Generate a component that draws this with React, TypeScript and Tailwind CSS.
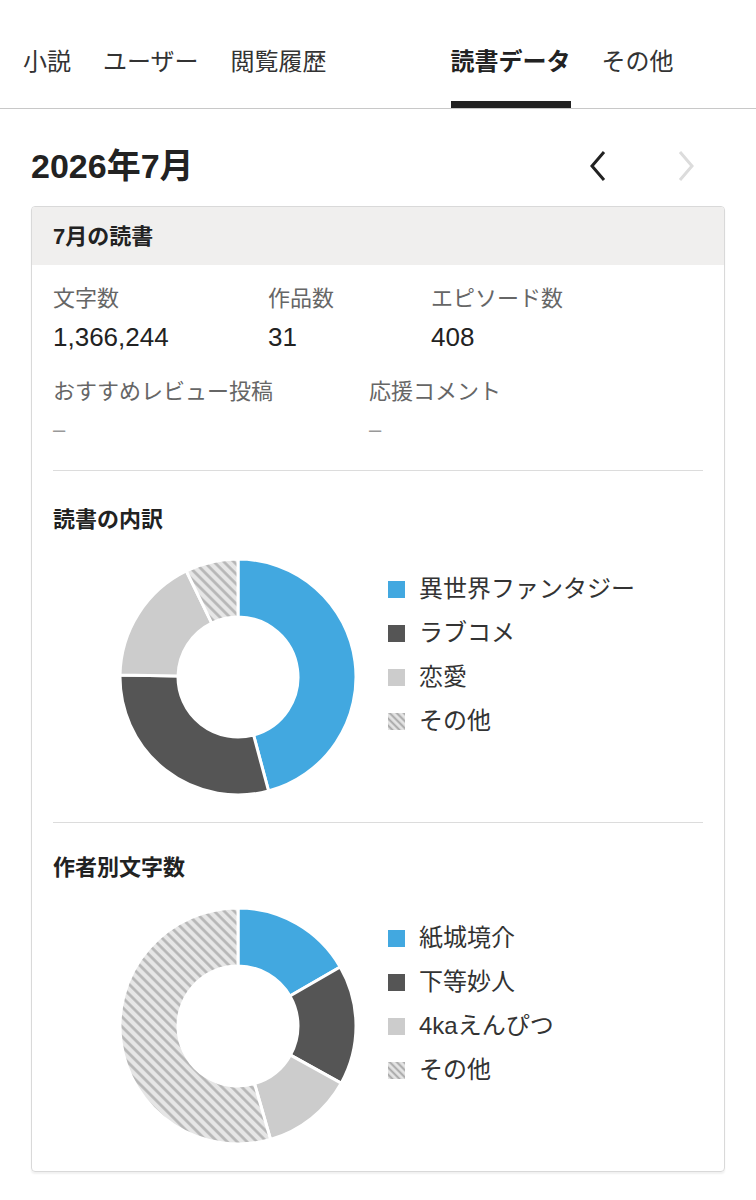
import React from "react";

type Seg = { from: number; to: number; fill: string };

function pt(cx: number, cy: number, r: number, deg: number) {
  const a = ((deg - 90) * Math.PI) / 180;
  return [cx + r * Math.cos(a), cy + r * Math.sin(a)];
}

function arcPath(cx: number, cy: number, ro: number, ri: number, a0: number, a1: number) {
  const [x0, y0] = pt(cx, cy, ro, a0);
  const [x1, y1] = pt(cx, cy, ro, a1);
  const [x2, y2] = pt(cx, cy, ri, a1);
  const [x3, y3] = pt(cx, cy, ri, a0);
  const large = a1 - a0 > 180 ? 1 : 0;
  return `M ${x0} ${y0} A ${ro} ${ro} 0 ${large} 1 ${x1} ${y1} L ${x2} ${y2} A ${ri} ${ri} 0 ${large} 0 ${x3} ${y3} Z`;
}

const BLUE = "#42a8e0";
const DARK = "#555555";
const LIGHT = "#cccccc";

function Donut({ id, segs }: { id: string; segs: Seg[] }) {
  return (
    <svg width="240" height="240" viewBox="0 0 240 240" className="shrink-0">
      <defs>
        <pattern id={id} width="7" height="7" patternUnits="userSpaceOnUse" patternTransform="rotate(-45)">
          <rect width="7" height="7" fill="#e6e6e6" />
          <line x1="1.5" y1="0" x2="1.5" y2="7" stroke="#b4b4b4" strokeWidth="2.6" />
        </pattern>
      </defs>
      {segs.map((s, i) => (
        <path
          key={i}
          d={arcPath(120, 120, 118, 60, s.from, s.to)}
          fill={s.fill === "hatch" ? `url(#${id})` : s.fill}
          stroke="#ffffff"
          strokeWidth="3"
          strokeLinejoin="miter"
        />
      ))}
    </svg>
  );
}

function Swatch({ kind }: { kind: string }) {
  if (kind === "hatch") {
    return (
      <svg width="17" height="17" viewBox="0 0 17 17" className="shrink-0">
        <defs>
          <pattern id="sw" width="5" height="5" patternUnits="userSpaceOnUse" patternTransform="rotate(-45)">
            <rect width="5" height="5" fill="#e4e4e4" />
            <line x1="1.2" y1="0" x2="1.2" y2="5" stroke="#aaaaaa" strokeWidth="2" />
          </pattern>
        </defs>
        <rect width="17" height="17" fill="url(#sw)" />
      </svg>
    );
  }
  return <span className="block w-[17px] h-[17px] shrink-0" style={{ backgroundColor: kind }} />;
}

function Legend({ items }: { items: { c: string; t: string }[] }) {
  return (
    <div className="flex flex-col pt-[10px] ml-[30px]">
      {items.map((it) => (
        <div key={it.t} className="flex items-center h-[44px] gap-[14px]">
          <Swatch kind={it.c} />
          <span className="text-[24px] leading-none text-[#333]">{it.t}</span>
        </div>
      ))}
    </div>
  );
}

export default function App() {
  return (
    <div className="w-[756px] min-h-[1200px] bg-white text-[#222] font-['Liberation_Sans','Noto_Sans_CJK_JP',sans-serif]">
      {/* Tabs */}
      <nav className="flex h-[109px] border-b border-[#c8c8c8] pl-[23px]">
        <div className="h-[108px] pt-[23px] border-b-[7px] border-transparent flex items-center text-[24px] text-[#333]">小説</div>
        <div className="h-[108px] pt-[23px] border-b-[7px] border-transparent flex items-center text-[24px] text-[#333] ml-[32px]">ユーザー</div>
        <div className="h-[108px] pt-[23px] border-b-[7px] border-transparent flex items-center text-[24px] text-[#333] ml-[32px]">閲覧履歴</div>
        <div className="h-[108px] pt-[23px] border-b-[7px] border-[#222] flex items-center text-[24px] font-bold text-[#222] ml-[124px]">読書データ</div>
        <div className="h-[108px] pt-[23px] border-b-[7px] border-transparent flex items-center text-[24px] text-[#333] ml-[31px]">その他</div>
      </nav>

      {/* Month header */}
      <div className="flex items-center h-[40px] mt-[37px] pl-[31px] pr-[60px]">
        <h1 className="text-[34px] font-bold leading-none text-[#222]">2026年7月</h1>
        <div className="ml-auto flex items-center gap-[68px]">
          <svg width="20" height="32" viewBox="0 0 20 32">
            <polyline points="16,2 4,16 16,30" fill="none" stroke="#222" strokeWidth="3" />
          </svg>
          <svg width="20" height="32" viewBox="0 0 20 32">
            <polyline points="4,2 16,16 4,30" fill="none" stroke="#dcdcdc" strokeWidth="3" />
          </svg>
        </div>
      </div>

      {/* Card */}
      <div className="mx-[31px] mt-[20px] border border-[#d9d9d9] rounded-[4px] shadow-[0_2px_2px_rgba(0,0,0,0.06)] overflow-hidden">
        <div className="h-[58px] bg-[#f0efee] flex items-center px-[21px]">
          <span className="text-[22px] font-bold text-[#222]">7月の読書</span>
        </div>

        <div className="px-[21px] pb-[25px]">
          {/* Stats row 1 */}
          <div className="flex pt-[19px]">
            <div className="w-[215px]">
              <div className="text-[22px] leading-[30px] text-[#666]">文字数</div>
              <div className="text-[26px] leading-[34px] mt-[6px] text-[#222]">1,366,244</div>
            </div>
            <div className="w-[163px]">
              <div className="text-[22px] leading-[30px] text-[#666]">作品数</div>
              <div className="text-[26px] leading-[34px] mt-[6px] text-[#222]">31</div>
            </div>
            <div>
              <div className="text-[22px] leading-[30px] text-[#666]">エピソード数</div>
              <div className="text-[26px] leading-[34px] mt-[6px] text-[#222]">408</div>
            </div>
          </div>
          {/* Stats row 2 */}
          <div className="flex mt-[23px]">
            <div className="w-[316px]">
              <div className="text-[22px] leading-[30px] text-[#666]">おすすめレビュー投稿</div>
              <div className="text-[22px] leading-[30px] mt-[8px] text-[#999]">–</div>
            </div>
            <div>
              <div className="text-[22px] leading-[30px] text-[#666]">応援コメント</div>
              <div className="text-[22px] leading-[30px] mt-[8px] text-[#999]">–</div>
            </div>
          </div>

          <div className="h-px bg-[#dcdcdc] mt-[25px]" />

          <h2 className="text-[22px] font-bold leading-[30px] mt-[34px] text-[#222]">読書の内訳</h2>
          <div className="flex items-start mt-[22px] ml-[65px]">
            <Donut
              id="h1"
              segs={[
                { from: 0, to: 165, fill: BLUE },
                { from: 165, to: 271, fill: DARK },
                { from: 271, to: 334, fill: LIGHT },
                { from: 334, to: 360, fill: "hatch" },
              ]}
            />
            <Legend
              items={[
                { c: BLUE, t: "異世界ファンタジー" },
                { c: DARK, t: "ラブコメ" },
                { c: LIGHT, t: "恋愛" },
                { c: "hatch", t: "その他" },
              ]}
            />
          </div>

          <div className="h-px bg-[#dcdcdc] mt-[25px]" />

          <h2 className="text-[22px] font-bold leading-[30px] mt-[30px] text-[#222]">作者別文字数</h2>
          <div className="flex items-start mt-[23px] ml-[65px]">
            <Donut
              id="h2"
              segs={[
                { from: 0, to: 60, fill: BLUE },
                { from: 60, to: 119, fill: DARK },
                { from: 119, to: 164, fill: LIGHT },
                { from: 164, to: 360, fill: "hatch" },
              ]}
            />
            <Legend
              items={[
                { c: BLUE, t: "紙城境介" },
                { c: DARK, t: "下等妙人" },
                { c: LIGHT, t: "4kaえんぴつ" },
                { c: "hatch", t: "その他" },
              ]}
            />
          </div>
        </div>
      </div>
    </div>
  );
}
